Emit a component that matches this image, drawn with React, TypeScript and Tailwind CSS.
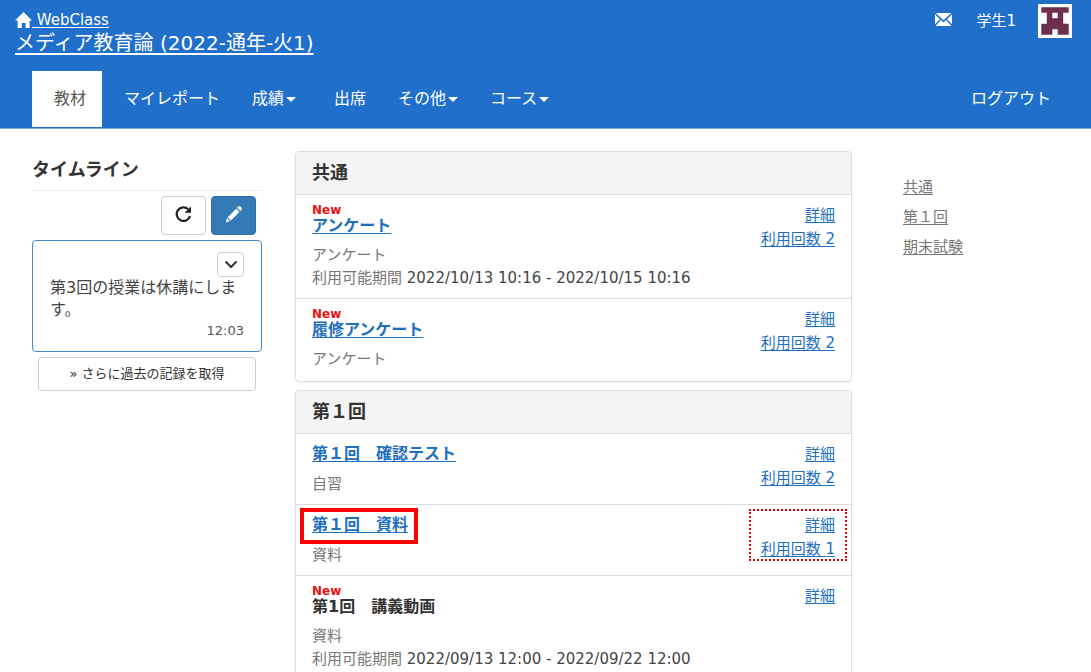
import type { ReactNode } from 'react'
import { clsx } from 'clsx'

interface Material {
  title: string
  kind: string
  isNew?: boolean
  isPlain?: boolean
  period?: string
  uses?: number
  isMarked?: boolean
}

interface Section {
  title: string
  items: Material[]
}

const sections: Section[] = [
  {
    title: '共通',
    items: [
      {
        title: 'アンケート',
        kind: 'アンケート',
        isNew: true,
        period: '2022/10/13 10:16 - 2022/10/15 10:16',
        uses: 2,
      },
      { title: '履修アンケート', kind: 'アンケート', isNew: true, uses: 2 },
    ],
  },
  {
    title: '第１回',
    items: [
      { title: '第１回　確認テスト', kind: '自習', uses: 2 },
      { title: '第１回　資料', kind: '資料', uses: 1, isMarked: true },
      {
        title: '第1回　講義動画',
        kind: '資料',
        isNew: true,
        isPlain: true,
        period: '2022/09/13 12:00 - 2022/09/22 12:00',
      },
    ],
  },
]

const menus = [
  { label: '教材', active: true },
  { label: 'マイレポート' },
  { label: '成績', dropdown: true },
  { label: '出席' },
  { label: 'その他', dropdown: true },
  { label: 'コース', dropdown: true },
]

const anchors = ['共通', '第１回', '期末試験']

function HomeIcon() {
  return (
    <svg viewBox="0 0 17 16" className="h-4 w-[17px]" fill="currentColor" aria-hidden="true">
      <path d="M8.5 0 17 8.6h-2.4V16h-4v-5H6.8v5H2.6V8.6H0z" />
    </svg>
  )
}

function MailIcon() {
  return (
    <svg viewBox="0 0 17 13" className="h-[13px] w-[17px]" fill="currentColor" aria-hidden="true">
      <path d="M.8 0h15.400L8.500 7.200zM0 1.200l5 5L0 11.200zM17 1.200v10l-5-5zM6 7.100l2.500 2.400L11 7.100l5.400 5.900H.6z" />
    </svg>
  )
}

function ReloadIcon() {
  return (
    <svg viewBox="0 0 17 16" className="h-4 w-[17px]" aria-hidden="true">
      <path d="M15 10.200A6.800 6.800 0 1 1 13.200 3.200" fill="none" stroke="#222" strokeWidth="2.2" />
      <path d="M16 .4v6.400H9.600z" fill="#222" />
    </svg>
  )
}

function PencilIcon() {
  return (
    <svg viewBox="0 0 18 18" className="size-[18px]" fill="#fff" aria-hidden="true">
      <path d="M13.300 1.500q1-1 2 0l1.300 1.300q1 1 0 2l-1.300 1.300-3.300-3.300zM11.200 3.700l3.200 3.200-8.500 8.500-3.200-3.200zM2 13l3 3-4.300 1.400z" />
    </svg>
  )
}

function ChevronIcon() {
  return (
    <svg viewBox="0 0 14 9" className="h-[9px] w-3.5" fill="none" stroke="#333" strokeWidth="2" aria-hidden="true">
      <path d="M1.500 1.500 7 7l5.500-5.500" />
    </svg>
  )
}

function Avatar() {
  return (
    <svg viewBox="0 0 34 34" className="size-[34px]" role="img" aria-label="学生1">
      <path d="M0 0h34v34H0z" fill="#fff" />
      <path
        d="M3.300 3.300h27.400v5.500h-5.500v10.900h5.500v11h-11v-5.500h-5.400v5.500h-11v-11h5.500V8.800H3.300z"
        fill="#6e2e4e"
      />
      <path d="M14.300 8.800h5.400v5.500h-5.400z" fill="#fff" />
    </svg>
  )
}

function Header() {
  return (
    <header className="border-b border-[#7fa9d8] bg-[#1f6fcb] pb-px text-white">
      <div className="flex h-[71px] items-start justify-between pl-[15px] pr-[19px]">
        <div className="flex flex-col items-start pt-2.5">
          <a href="#top" className="flex h-5 items-center text-[15px] leading-5">
            <HomeIcon />
            <span className="whitespace-pre underline underline-offset-2"> WebClass</span>
          </a>
          <a href="#course" className="text-xl leading-[26px] underline underline-offset-3">
            メディア教育論 (2022-通年-火1)
          </a>
        </div>
        <div className="flex items-center pt-1">
          <a href="#mail" aria-label="メール" className="pb-1">
            <MailIcon />
          </a>
          <a href="#user" className="ml-6 mr-[22px] text-[15px]">
            学生1
          </a>
          <Avatar />
        </div>
      </div>
      <nav className="flex items-stretch justify-between pl-8 pr-10 leading-[56px]">
        <ul className="flex">
          {menus.map((menu) => (
            <li key={menu.label}>
              <a
                href="#menu"
                className={clsx(
                  'flex items-center pr-4',
                  menu.dropdown ? 'pl-4' : 'pl-[22px]',
                  menu.active && 'bg-white text-[#555]'
                )}
              >
                {menu.label}
                {menu.dropdown && (
                  <span className="ml-0.5 border-x-[5px] border-t-[5px] border-x-transparent border-t-white" />
                )}
              </a>
            </li>
          ))}
        </ul>
        <a href="#logout">ログアウト</a>
      </nav>
    </header>
  )
}

function Timeline() {
  return (
    <aside className="w-[230px] shrink-0 pt-1.5">
      <h2 className="border-b border-[#eee] pb-2 text-lg font-bold leading-[25px]">タイムライン</h2>
      <div className="flex justify-end gap-[5px] pb-[5px] pr-1.5 pt-[5px]">
        <button
          type="button"
          aria-label="更新"
          className="flex h-[39px] w-[45px] items-center justify-center rounded border border-[#ccc] bg-white pb-1"
        >
          <ReloadIcon />
        </button>
        <button
          type="button"
          aria-label="投稿"
          className="flex h-[39px] w-[45px] items-center justify-center rounded border border-[#2e6da4] bg-[#337ab7] pb-1"
        >
          <PencilIcon />
        </button>
      </div>
      <div className="rounded border border-[#428bca] px-[17px] pb-2.5 pt-[11px]">
        <div className="flex justify-end">
          <button
            type="button"
            aria-label="メニュー"
            className="flex h-[25px] w-[27px] items-center justify-center rounded-sm border border-[#ccc]"
          >
            <ChevronIcon />
          </button>
        </div>
        <p className="text-base leading-[22px] text-[#444]">第3回の授業は休講にします。</p>
        <p className="text-right text-[13px] leading-5 text-[#555]">12:03</p>
      </div>
      <button
        type="button"
        className="mx-1.5 mt-[5px] block h-[34px] w-[218px] rounded-sm border border-[#ccc] text-[13px] text-[#333]"
      >
        » さらに過去の記録を取得
      </button>
    </aside>
  )
}

function ItemLink({ children }: { children: ReactNode }) {
  return (
    <a href="#item" className="text-[#1f6fbf] underline underline-offset-2">
      {children}
    </a>
  )
}

function MaterialRow({ item }: { item: Material }) {
  return (
    <li className="flex justify-between border-t border-[#ddd] px-4 py-2">
      <div className="pt-px">
        {item.isNew && <p className="text-xs font-bold leading-3 text-[#e81010]">New</p>}
        <h3 className={clsx('relative w-fit text-base font-bold', item.isNew ? 'leading-5' : 'leading-[22px]')}>
          {item.isPlain ? item.title : <ItemLink>{item.title}</ItemLink>}
          {item.isMarked && (
            <span className="absolute -bottom-2 -left-3 -right-2.5 -top-1.5 border-4 border-[#fe0000]" />
          )}
        </h3>
        <p className="mt-2 text-[15px] leading-[23px] text-[#777]">{item.kind}</p>
        {item.period && (
          <p className="text-[15px] leading-[23px] text-[#777]">
            利用可能期間 <span className="text-[#444]">{item.period}</span>
          </p>
        )}
      </div>
      <div className="relative flex h-fit flex-col items-end text-[15px] leading-6">
        <ItemLink>詳細</ItemLink>
        {item.uses && <ItemLink>利用回数 {item.uses}</ItemLink>}
        {item.isMarked && (
          <span className="absolute -inset-x-3 -top-1 bottom-0 border-2 border-dotted border-[#e00000]" />
        )}
      </div>
    </li>
  )
}

export default function App() {
  return (
    <div className="h-screen overflow-hidden bg-white font-['DejaVu_Sans','Noto_Sans_CJK_JP',sans-serif] text-base text-[#333]">
      <Header />
      <div className="flex px-8 pt-[22px]">
        <Timeline />
        <main className="ml-[33px] flex min-w-0 flex-1 flex-col gap-2">
          {sections.map((section) => (
            <section key={section.title} className="overflow-hidden rounded border border-[#ddd] shadow-xs">
              <h2 className="bg-[#f4f4f4] px-4 py-[9px] text-lg font-bold leading-6">{section.title}</h2>
              <ul className="pb-0.5">
                {section.items.map((item) => (
                  <MaterialRow key={item.title} item={item} />
                ))}
              </ul>
            </section>
          ))}
        </main>
        <nav className="ml-[51px] w-[156px] shrink-0 pt-[21px]">
          <ul>
            {anchors.map((anchor) => (
              <li key={anchor} className="text-[15px] leading-[30px]">
                <a href="#section" className="text-[#777] underline underline-offset-2">
                  {anchor}
                </a>
              </li>
            ))}
          </ul>
        </nav>
      </div>
    </div>
  )
}
